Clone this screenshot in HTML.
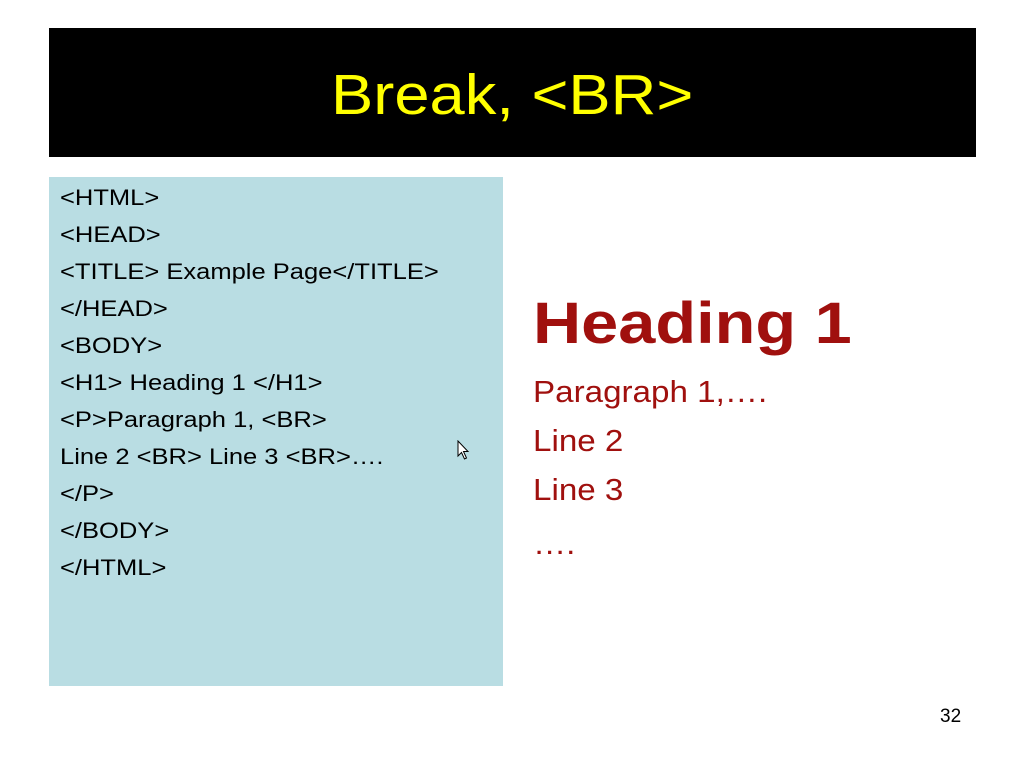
<!DOCTYPE html>
<html><head><style>
body{margin:0;width:1025px;height:767px;background:#fff;position:relative;font-family:"Liberation Sans",sans-serif;overflow:hidden}
#t{position:absolute;left:49px;top:28px;width:927px;height:129px;background:#000;color:#ff0;font-size:57px;text-align:center;line-height:134px}
#t span{display:inline-block;transform:scaleX(1.11)}
#l{position:absolute;left:49px;top:177px;width:454px;height:509px;background:#b9dde3}
#l div{position:absolute;left:11px;font-size:22px;color:#000;transform:scaleX(1.16);transform-origin:0 0;white-space:nowrap}
.r{position:absolute;left:533px;color:#a0100e;transform:scaleX(1.07);transform-origin:0 0;white-space:nowrap}
#n{position:absolute;left:940px;top:706px;font-size:19px}
</style></head><body>
<div id="t"><span>Break, &lt;BR&gt;</span></div>
<div id="l">
<div style="top:8px">&lt;HTML&gt;</div>
<div style="top:45px">&lt;HEAD&gt;</div>
<div style="top:82px">&lt;TITLE&gt; Example Page&lt;/TITLE&gt;</div>
<div style="top:119px">&lt;/HEAD&gt;</div>
<div style="top:156px">&lt;BODY&gt;</div>
<div style="top:193px">&lt;H1&gt; Heading 1 &lt;/H1&gt;</div>
<div style="top:230px">&lt;P&gt;Paragraph 1, &lt;BR&gt;</div>
<div style="top:267px">Line 2 &lt;BR&gt; Line 3 &lt;BR&gt;….</div>
<div style="top:304px">&lt;/P&gt;</div>
<div style="top:341px">&lt;/BODY&gt;</div>
<div style="top:378px">&lt;/HTML&gt;</div>
</div>
<svg style="position:absolute;left:457px;top:440px" width="14" height="22" viewBox="0 0 14 22"><path d="M1 1 L1 16 L4.5 12.5 L7.5 19 L9.5 18 L6.5 11.5 L11 11.5 Z" fill="#fff" stroke="#000" stroke-width="1"/></svg>
<div class="r" style="top:290px;font-size:58px;font-weight:bold;transform:scaleX(1.15)">Heading 1</div>
<div class="r" style="top:374px;font-size:31px">Paragraph 1,….</div>
<div class="r" style="top:423px;font-size:31px">Line 2</div>
<div class="r" style="top:472px;font-size:31px">Line 3</div>
<div class="r" style="top:526px;font-size:31px">….</div>
<div id="n">32</div>
</body></html>
